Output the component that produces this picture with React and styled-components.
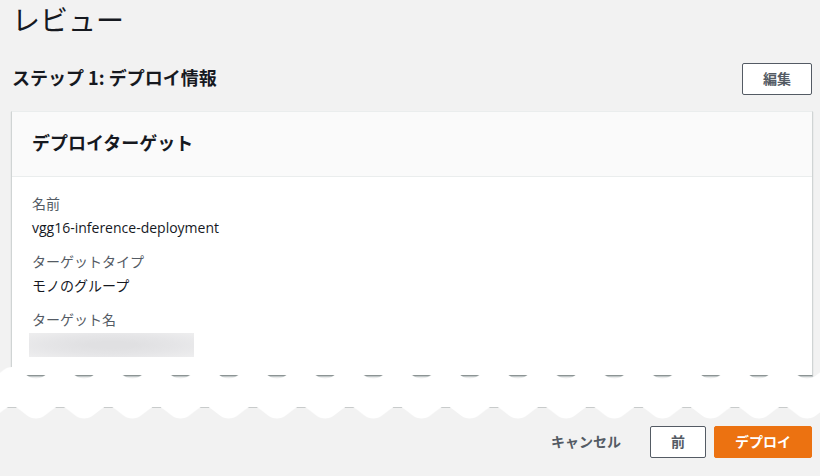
import React from 'react';
import styled, { createGlobalStyle } from 'styled-components';

const GlobalStyle = createGlobalStyle`
  * { box-sizing: border-box; }
  body {
    margin: 0;
    background: #f2f2f2;
    color: #16191f;
    font-family: "Open Sans", "Noto Sans CJK JP", sans-serif;
    font-size: 14px;
    line-height: 20px;
  }
`;

const Page = styled.main`
  overflow: hidden;
`;

const Review = styled.section`
  padding: 0 7px 0 11px;
`;

const Title = styled.h1`
  margin: 0;
  padding-left: 1px;
  font-family: "Noto Sans CJK JP", sans-serif;
  font-size: 28px;
  font-weight: 400;
  line-height: 38px;
`;

const StepHeader = styled.div`
  display: flex;
  align-items: flex-start;
  justify-content: space-between;
  padding: 25px 1px 16px;
`;

const Heading = styled.h2`
  margin: 0;
  font-family: "Noto Sans CJK JP", sans-serif;
  font-size: 18px;
  font-weight: 700;
  line-height: 28px;
`;

const Button = styled.button`
  height: 32px;
  padding: 0 20px 2px;
  border: 1px solid ${(p) => (p.$primary ? '#ec7211' : '#545b64')};
  border-radius: 2px;
  background: ${(p) => (p.$primary ? '#ec7211' : '#fff')};
  color: ${(p) => (p.$primary ? '#fff' : '#545b64')};
  font-family: "Noto Sans CJK JP", sans-serif;
  font-size: 14px;
  font-weight: 700;
  line-height: 20px;
  cursor: pointer;
`;

const LinkButton = styled(Button)`
  border-color: transparent;
  background: transparent;
`;

const Card = styled.div`
  border: 1px solid #d0d4d4;
  border-top-color: #eaeded;
  border-bottom-color: #8c9494;
  background: #fff;
  box-shadow: 0 1px 1px rgba(0, 28, 36, 0.2);
`;

const CardHeader = styled.header`
  padding: 16px 20px 20px;
  border-bottom: 1px solid #eaeded;
  background: #fafafa;
`;

const Details = styled.dl`
  display: grid;
  gap: 10px;
  margin: 0;
  padding: 15px 20px 18px;
`;

const Term = styled.dt`
  color: #545b64;
  line-height: 24px;
`;

const Value = styled.dd`
  margin: 0;
  line-height: 24px;
`;

const Redacted = styled.div`
  width: 165px;
  height: 24px;
  margin: 1px 0 0 -3px;
  background: radial-gradient(ellipse at center, #e0e0e2 20%, #e5e5e7 55%, #eeeeef 100%);
`;

const TornEdge = styled.svg`
  display: block;
  position: relative;
  width: 100%;
  height: 52px;
  margin-top: -9px;
`;

const Actions = styled.footer`
  display: flex;
  justify-content: flex-end;
  gap: 8px;
  padding: 7px 8px 18px;
`;

function Tear() {
  return (
    <TornEdge aria-hidden="true">
      <defs>
        <pattern id="tear" x="-12.2" y="0" width="48.2" height="52" patternUnits="userSpaceOnUse">
          <path
            fill="#fff"
            d="M0 11.5 C11 11.5 14 0 24.1 0 S37.2 11.5 48.2 11.5 V51.5 C37.2 51.5 34.2 40 24.1 40 S11 51.5 0 51.5Z"
          />
          <path d="M19.5 40.5 H28.7" stroke="#c8cbcb" />
        </pattern>
      </defs>
      <rect width="100%" height="52" fill="url(#tear)" />
    </TornEdge>
  );
}

export default function App() {
  return (
    <Page>
      <GlobalStyle />
      <Review>
        <Title>レビュー</Title>
        <StepHeader>
          <Heading>ステップ 1: デプロイ情報</Heading>
          <Button type="button">編集</Button>
        </StepHeader>
        <Card>
          <CardHeader>
            <Heading>デプロイターゲット</Heading>
          </CardHeader>
          <Details>
            <div>
              <Term>名前</Term>
              <Value>vgg16-inference-deployment</Value>
            </div>
            <div>
              <Term>ターゲットタイプ</Term>
              <Value>モノのグループ</Value>
            </div>
            <div>
              <Term>ターゲット名</Term>
              <Value>
                <Redacted />
              </Value>
            </div>
          </Details>
        </Card>
      </Review>
      <Tear />
      <Actions>
        <LinkButton type="button">キャンセル</LinkButton>
        <Button type="button">前</Button>
        <Button type="button" $primary>デプロイ</Button>
      </Actions>
    </Page>
  );
}
